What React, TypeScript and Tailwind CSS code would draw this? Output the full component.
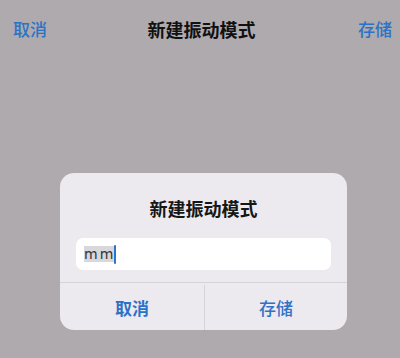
import React from 'react';

const font = { fontFamily: '"Noto Sans CJK SC", "Noto Sans", sans-serif' };

const App: React.FC = () => {
  return (
    <div className="w-[400px] h-[358px] bg-[#aeaaae] flex flex-col overflow-hidden" style={font}>
      <div className="h-[60px] flex items-center justify-between pl-[13px] pr-[8px] pb-[2px]">
        <span className="text-[17px] font-medium text-[#2c72c6]">取消</span>
        <span className="text-[18px] font-bold text-[#111] mr-[2px]">新建振动模式</span>
        <span className="text-[17px] font-medium text-[#2c72c6]">存储</span>
      </div>
      <div className="flex-1 flex flex-col pt-[113px] pl-[60px]">
        <div className="w-[287px] h-[157px] bg-[#ece9ef] rounded-[14px] flex flex-col">
          <div className="h-[65px] pt-[24px] text-center">
            <span className="text-[18px] leading-[22px] font-bold text-[#161616] block">新建振动模式</span>
          </div>
          <div className="pl-[16px] pr-[16px] pb-[12px]">
            <div className="h-[32px] bg-white rounded-[7px] flex items-center pl-[8px]">
              <span className="text-[14px] text-[#333] bg-[#d8d8dc] leading-[16px] tracking-[2px]" style={{ fontFamily: '"DejaVu Sans", sans-serif' }}>mm</span>
              <span className="w-[2px] h-[19px] bg-[#2f74c8] rounded-full -ml-[1px]"></span>
            </div>
          </div>
          <div className="flex-1 flex border-t border-[#d5d2d8] pt-[2px]">
            <div className="w-[144px] flex items-center justify-center">
              <span className="text-[17px] font-bold text-[#2c72c6]">取消</span>
            </div>
            <div className="flex-1 flex items-center justify-center border-l border-[#d5d2d8]">
              <span className="text-[17px] font-medium text-[#2c72c6]">存储</span>
            </div>
          </div>
        </div>
      </div>
    </div>
  );
};

export default App;
